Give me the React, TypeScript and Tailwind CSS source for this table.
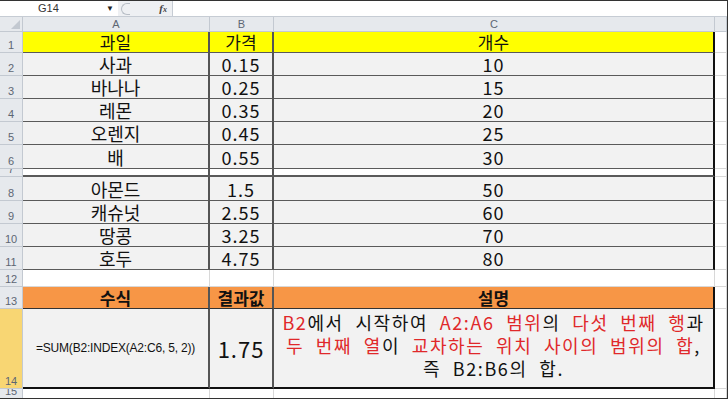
import React from "react";

const kr = "font-['Noto_Sans_CJK_KR',sans-serif]";

const fruits: [string, string, string][] = [
  ["사과", "0.15", "10"],
  ["바나나", "0.25", "15"],
  ["레몬", "0.35", "20"],
  ["오렌지", "0.45", "25"],
  ["배", "0.55", "30"],
];

const nuts: [string, string, string][] = [
  ["아몬드", "1.5", "50"],
  ["캐슈넛", "2.55", "60"],
  ["땅콩", "3.25", "70"],
  ["호두", "4.75", "80"],
];

function RowHead({ n, selected }: { n: number; selected?: boolean }) {
  return (
    <div
      className={`flex items-end justify-center overflow-hidden border-r border-b border-[#c3c9d1] pb-[1px] text-[11px] leading-[12px] text-[#5d6673] font-['Liberation_Sans',sans-serif] ${
        selected ? "bg-[#f8d673]" : "bg-[#e6e9ed]"
      }`}
    >
      {n}
    </div>
  );
}

function Empty() {
  return <div className="border-r border-b border-[#d8d8d8] bg-white" />;
}

function R({ children }: { children: React.ReactNode }) {
  return <span className="text-[#e0282a]">{children}</span>;
}

function DataRow({ n, row }: { n: number; row: [string, string, string] }) {
  return (
    <>
      <RowHead n={n} />
      <div className="flex items-end justify-center border-r-2 border-b border-r-[#555] border-b-[#5a5a5a] bg-[#f2f2f2] text-[18px] leading-[21px] text-[#111]">
        {row[0]}
      </div>
      <div className="flex items-end justify-center border-r-2 border-b border-r-[#555] border-b-[#5a5a5a] bg-[#f2f2f2] text-[18px] leading-[21px] tracking-[1px] text-[#111]">
        {row[1]}
      </div>
      <div className="flex items-end justify-center border-r-2 border-b border-r-[#111] border-b-[#5a5a5a] bg-[#f2f2f2] text-[18px] leading-[21px] tracking-[1px] text-[#111]">
        {row[2]}
      </div>
      <Empty />
    </>
  );
}

export default function App() {
  return (
    <div className={`h-[399px] w-[728px] overflow-hidden border-t border-r border-b border-[#333] bg-white ${kr}`}>
      {/* formula bar */}
      <div className="flex h-[16px] items-center border-b border-[#c6ccd4] bg-white font-['Liberation_Sans',sans-serif] text-[11px] text-[#333]">
        <div className="flex w-[118px] items-center">
          <span className="ml-[38px]">G14</span>
          <span className="ml-auto mr-[4px] text-[8px] text-[#222]">▼</span>
        </div>
        <div className="flex h-full w-[54px] items-center bg-[#eef0f3]">
          <div className="ml-[3px] h-[12px] w-[9px] rounded-l-full border border-r-0 border-[#b8bec6]" />
          <span className="ml-auto mr-[5px] font-['Liberation_Serif',serif] text-[11px] italic font-bold text-[#444]">
            f<span className="text-[8px]">x</span>
          </span>
        </div>
        <div className="h-full flex-1 border-l border-[#c6ccd4] bg-white" />
      </div>

      <div className="grid grid-cols-[23px_187px_64px_441px_1fr] grid-rows-[15px_21px_23px_23px_23px_23px_24px_8px_24px_23px_23px_23px_17px_22px_80px_10px]">
        {/* column headers */}
        <div className="relative border-r border-b border-[#c3c9d1] bg-[#e6e9ed]">
          <svg className="absolute right-[2px] bottom-[2px]" width="9" height="9" viewBox="0 0 9 9">
            <path d="M9 0 L9 9 L0 9 Z" fill="#c2c8d0" />
          </svg>
        </div>
        {["A", "B", "C", ""].map((c, i) => (
          <div
            key={i}
            className="flex items-center justify-center border-r border-b border-[#c3c9d1] bg-[#e6e9ed] font-['Liberation_Sans',sans-serif] text-[11px] text-[#5d6673]"
          >
            {c}
          </div>
        ))}

        {/* row 1 */}
        <RowHead n={1} />
        <div className="flex items-center justify-center border-r-2 border-b border-r-[#555] border-b-[#5a5a5a] bg-[#ffff00] text-[17px] leading-[20px] text-[#111]">
          과일
        </div>
        <div className="flex items-center justify-center border-r-2 border-b border-r-[#555] border-b-[#5a5a5a] bg-[#ffff00] text-[17px] leading-[20px] text-[#111]">
          가격
        </div>
        <div className="flex items-center justify-center border-r-2 border-b border-r-[#111] border-b-[#5a5a5a] bg-[#ffff00] text-[17px] leading-[20px] text-[#111]">
          개수
        </div>
        <Empty />

        {fruits.map((r, i) => (
          <DataRow key={r[0]} n={i + 2} row={r} />
        ))}

        {/* row 7 */}
        <RowHead n={7} />
        <div className="border-r-2 border-b-2 border-r-[#555] border-b-[#5a5a5a] bg-white" />
        <div className="border-r-2 border-b-2 border-r-[#555] border-b-[#5a5a5a] bg-white" />
        <div className="border-r-2 border-b-2 border-r-[#111] border-b-[#5a5a5a] bg-white" />
        <Empty />

        {nuts.map((r, i) => (
          <DataRow key={r[0]} n={i + 8} row={r} />
        ))}

        {/* row 12 */}
        <RowHead n={12} />
        <Empty />
        <Empty />
        <Empty />
        <Empty />

        {/* row 13 */}
        <RowHead n={13} />
        <div className="flex items-center justify-center border-r-2 border-b border-r-[#555] border-b-[#333] bg-[#f79646] text-[17px] leading-[20px] font-bold text-[#111]">
          수식
        </div>
        <div className="flex items-center justify-center border-r-2 border-b border-r-[#555] border-b-[#333] bg-[#f79646] text-[17px] leading-[20px] font-bold text-[#111]">
          결과값
        </div>
        <div className="flex items-center justify-center border-r-2 border-b border-r-[#111] border-b-[#333] bg-[#f79646] text-[17px] leading-[20px] font-bold text-[#111]">
          설명
        </div>
        <Empty />

        {/* row 14 */}
        <RowHead n={14} selected />
        <div className="flex items-center justify-center border-r-2 border-b-2 border-r-[#555] border-b-[#111] bg-[#f2f2f2] font-['Liberation_Sans',sans-serif] text-[12px] tracking-[-0.2px] text-[#111]">
          =SUM(B2:INDEX(A2:C6, 5, 2))
        </div>
        <div className="flex items-center justify-center border-r-2 border-b-2 border-r-[#555] border-b-[#111] bg-[#f2f2f2] text-[22px] tracking-[1px] text-[#111]">
          1.75
        </div>
        <div className="flex flex-col items-center justify-start whitespace-nowrap border-r-2 border-b-2 border-r-[#111] border-b-[#111] bg-[#f2f2f2] pt-[2px] text-[18px] leading-[23px] tracking-[1.6px] [word-spacing:6px] text-[#111]">
          <div>
            <R>B2</R>에서 시작하여 <R>A2:A6 범위</R>의 <R>다섯 번째 행</R>과
          </div>
          <div>
            <R>두 번째 열</R>이 <R>교차하는 위치 사이의 범위의 합</R>,
          </div>
          <div>즉 B2:B6의 합.</div>
        </div>
        <Empty />

        {/* row 15 */}
        <RowHead n={15} />
        <Empty />
        <Empty />
        <Empty />
        <Empty />
      </div>
    </div>
  );
}
